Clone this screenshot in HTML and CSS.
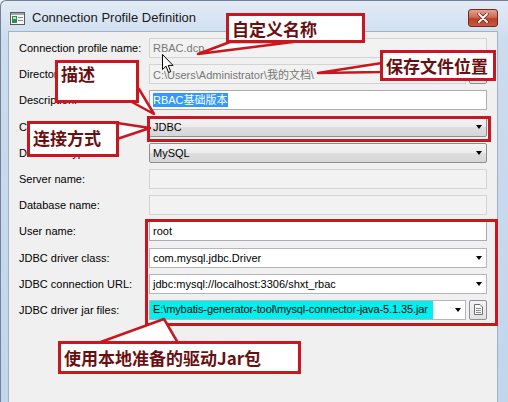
FILE: index.html
```html
<!DOCTYPE html>
<html lang="zh-CN">
<head>
    <meta charset="UTF-8">
    <title>Connection Profile Definition</title>
    <link rel="stylesheet" href="styles.css">
</head>
<body>
    <div class="window">
        <div class="titlebar">
            <svg class="app-icon" width="15" height="13" viewBox="0 0 15 13">
                <rect x="0.5" y="0.5" width="14" height="12" fill="#f6f6f6" stroke="#5a5a5a"/>
                <rect x="1" y="1" width="13" height="2" fill="#9aa6b4"/>
                <rect x="2" y="4" width="5" height="7" fill="#2f8f48"/>
                <rect x="3" y="5" width="3" height="2" fill="#bfe7c6"/>
                <rect x="8" y="5" width="5" height="1" fill="#8a8a8a"/>
                <rect x="8" y="8" width="5" height="1" fill="#8a8a8a"/>
            </svg>
            <span class="title">Connection Profile Definition</span>
            <div class="close-btn">
                <svg width="14" height="10" viewBox="0 0 14 10">
                    <path d="M3 1 L11 9 M11 1 L3 9" stroke="#7a2418" stroke-width="3.4" stroke-linecap="round"/>
                    <path d="M3 1 L11 9 M11 1 L3 9" stroke="#ffffff" stroke-width="1.8" stroke-linecap="round"/>
                </svg>
            </div>
        </div>

        <div class="client">
            <div class="form">
                <label>Connection profile name:</label>
                <div class="field disabled">RBAC.dcp</div>

                <label>Directory:</label>
                <div class="field-row">
                    <div class="field disabled">C:\Users\Administrator\我的文档\</div>
                    <div class="small-btn"></div>
                </div>

                <label>Description:</label>
                <div class="field"><span class="selected">RBAC基础版本</span></div>

                <label>Connection type:</label>
                <div class="field combo">JDBC<span class="arrow"></span></div>

                <label>Database type:</label>
                <div class="field combo">MySQL<span class="arrow"></span></div>

                <label>Server name:</label>
                <div class="field disabled"></div>

                <label>Database name:</label>
                <div class="field disabled"></div>

                <label>User name:</label>
                <div class="field">root</div>

                <label>JDBC driver class:</label>
                <div class="field editable">com.mysql.jdbc.Driver<span class="arrow"></span></div>

                <label>JDBC connection URL:</label>
                <div class="field editable">jdbc:mysql://localhost:3306/shxt_rbac<span class="arrow"></span></div>

                <label>JDBC driver jar files:</label>
                <div class="field-row">
                    <div class="field editable">
                        <span class="jar-highlight">E:\mybatis-generator-tool\mysql-connector-java-5.1.35.jar</span>
                        <span class="arrow"></span>
                    </div>
                    <div class="small-btn">
                        <svg width="9" height="11" viewBox="0 0 9 11">
                            <path d="M0.5 0.5 H6 L8.5 3 V10.5 H0.5 Z" fill="#fafafa" stroke="#6d6d6d"/>
                            <path d="M2 4.5 H7 M2 6.5 H7 M2 8.5 H7" stroke="#8c8c8c"/>
                        </svg>
                    </div>
                </div>
            </div>
        </div>

        <!-- annotations painted on top of the screenshot -->
        <div class="mark mark-type"></div>
        <div class="mark mark-jdbc"></div>

        <svg class="callouts" width="508" height="402" viewBox="0 0 508 402">
            <polygon points="229,41 197,53 292,41" />
            <polygon points="381,62 317,72 381,71" />
            <polygon points="129,100 153,113 138,88" />
            <polygon points="116,122 149,127 116,138" />
            <polygon points="97,342 163,318 177,342" />
        </svg>

        <svg class="cursor" width="13" height="20" viewBox="0 0 13 20">
            <path d="M0.5 0.5 V15.5 L4 12.2 L6.6 18.5 L8.8 17.6 L6.2 11.4 H11 Z" fill="#fff" stroke="#000"/>
        </svg>

        <div class="note note-name">自定义名称</div>
        <div class="note note-dir">保存文件位置</div>
        <div class="note note-desc">描述</div>
        <div class="note note-type">连接方式</div>
        <div class="note note-jar">使用本地准备的驱动Jar包</div>
    </div>
</body>
</html>
```

FILE: styles.css
```css
body {
    margin: 0;
    font-family: 'Liberation Sans', Arial, sans-serif;
    background-color: #f0f0f0;
}

.window {
    position: relative;
    width: 508px;
    height: 402px;
    overflow: hidden;
    box-sizing: border-box;
    padding: 0 10px 0 7px;
    background: linear-gradient(to bottom, #e2ebf5, #ccdcee 40px, #c2d5eb);
    border-top: 1px solid #6f8299;
    border-left: 1px solid #6f8299;
    border-top-left-radius: 6px;
}

.titlebar {
    height: 30px;
    display: flex;
    align-items: flex-start;
}

.app-icon {
    margin: 11px 0 0 2px;
}

.title {
    margin: 9px 0 0 7px;
    font-size: 13px;
    color: #1b1b1b;
}

.close-btn {
    margin: 8px 0 0 auto;
    width: 30px;
    height: 18px;
    box-sizing: border-box;
    border: 1px solid #6d2a20;
    border-radius: 3px;
    background: linear-gradient(to bottom, #e4a090, #cf6b55 45%, #b8402a 55%, #c9583e);
    display: flex;
    align-items: center;
    justify-content: center;
}

.client {
    height: 380px;
    background-color: #f0f0f0;
    border: 1px solid #9fb2ca;
    border-bottom: none;
}

.form {
    display: grid;
    grid-template-columns: 130px 1fr;
    row-gap: 6.2px;
    padding: 6px 10px 0 10px;
    font-size: 11px;
}

.form label {
    line-height: 20px;
    color: #000;
    white-space: nowrap;
}

.field {
    height: 20px;
    box-sizing: border-box;
    border: 1px solid #abadb3;
    background-color: #fff;
    padding: 0 4px 0 3px;
    display: flex;
    align-items: center;
    white-space: nowrap;
    overflow: hidden;
    color: #000;
}

.field.disabled {
    background-color: #f2f2f2;
    border-color: #d3d3d3;
    color: #777;
}

.field.combo {
    border-color: #8c8e91;
    border-radius: 2px;
    background: linear-gradient(to bottom, #f4f4f4, #ececec 50%, #dedede 51%, #d6d6d6);
}

.field.editable {
    border-color: #b4b6bb;
}

.arrow {
    margin-left: auto;
    width: 0;
    height: 0;
    border-left: 3.5px solid transparent;
    border-right: 3.5px solid transparent;
    border-top: 4px solid #000;
}

.field-row {
    display: flex;
    gap: 3px;
}

.field-row .field {
    flex: 1;
}

.small-btn {
    width: 18px;
    height: 20px;
    box-sizing: border-box;
    border: 1px solid #8c8e91;
    border-radius: 2px;
    background: linear-gradient(to bottom, #f4f4f4, #e2e2e2);
    display: flex;
    align-items: center;
    justify-content: center;
}

.selected {
    background-color: #3399ff;
    color: #fff;
    font-family: 'Liberation Sans', 'Noto Sans CJK SC', sans-serif;
    line-height: 14px;
}

.jar-highlight {
    align-self: stretch;
    margin: -5px 0 -4px -4px;
    padding-left: 4px;
    width: 280px;
    background-color: #00f0f0;
    display: flex;
    align-items: center;
    letter-spacing: -0.1px;
}

.mark {
    position: absolute;
    box-sizing: border-box;
    border: 3px solid #c8171e;
}

.mark-type {
    left: 146px;
    top: 115px;
    width: 344px;
    height: 26px;
}

.mark-jdbc {
    left: 144px;
    top: 218px;
    width: 353px;
    height: 107px;
}

.callouts {
    position: absolute;
    left: 0;
    top: 0;
}

.callouts polygon {
    fill: #fff;
    stroke: #c8171e;
    stroke-width: 2.5;
    stroke-linejoin: round;
}

.cursor {
    position: absolute;
    left: 161px;
    top: 53px;
}

.note {
    position: absolute;
    box-sizing: border-box;
    border: 3px solid #c8171e;
    background-color: #fff;
    padding-left: 3px;
    display: flex;
    align-items: center;
    font-family: 'Noto Sans CJK SC', sans-serif;
    font-weight: bold;
    font-size: 17px;
    color: #6a0f10;
    white-space: nowrap;
}

.note-name {
    left: 225px;
    top: 12px;
    width: 139px;
    height: 30px;
}

.note-dir {
    left: 379px;
    top: 49px;
    width: 116px;
    height: 31px;
}

.note-desc {
    left: 54px;
    top: 59px;
    width: 84px;
    height: 43px;
    align-items: flex-start;
    line-height: 22px;
}

.note-type {
    left: 26px;
    top: 120px;
    width: 92px;
    height: 36px;
    padding-bottom: 3px;
}

.note-jar {
    left: 57px;
    top: 340px;
    width: 243px;
    height: 33px;
}
```
